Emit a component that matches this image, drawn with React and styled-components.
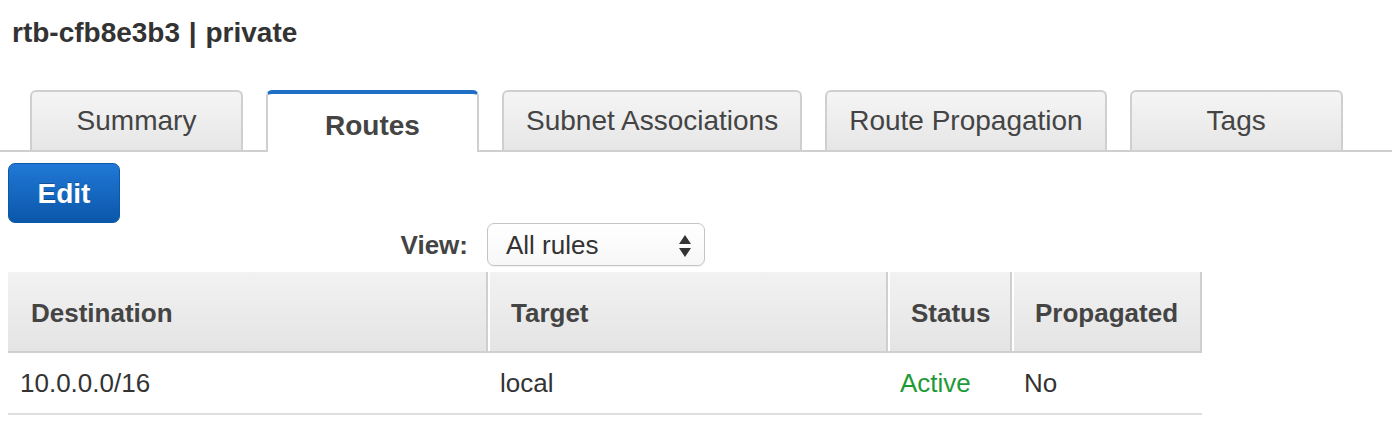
import styled, { createGlobalStyle } from "styled-components";

const GlobalStyle = createGlobalStyle`
  body {
    margin: 0;
    background: #fff;
    font-family: "Liberation Sans", Arial, Helvetica, sans-serif;
    color: #444;
  }
`;

const COLS = "480px 400px 124px 190px";

const Page = styled.div`
  width: 1392px;
  height: 448px;
  overflow: hidden;
`;

const Title = styled.h1`
  margin: 0;
  padding: 17px 12px 0;
  font-size: 28px;
  line-height: 32px;
  font-weight: 700;
  color: #333;
  height: 73px;
  box-sizing: border-box;
`;

const Sep = styled.span`
  margin: 0 1px;
`;

const TabBar = styled.div`
  display: flex;
  align-items: flex-end;
  gap: 23px;
  padding-left: 30px;
  margin-top: 17px;
  height: 60px;
  border-bottom: 2px solid #cfcfcf;
`;

const Tab = styled.div`
  box-sizing: border-box;
  min-width: 213px;
  padding: 0 22px;
  display: flex;
  align-items: center;
  justify-content: center;
  font-size: 28px;
  color: #444;
  border: 2px solid #cfcfcf;
  border-bottom: none;
  border-radius: 6px 6px 0 0;
  height: ${({ active }) => (active ? "62px" : "60px")};
  margin-bottom: ${({ active }) => (active ? "-2px" : "0")};
  background: ${({ active }) =>
    active ? "#fff" : "linear-gradient(#f5f5f5, #e6e6e6)"};
  border-top: ${({ active }) =>
    active ? "4px solid #1f6fc5" : "2px solid #cfcfcf"};
  font-weight: ${({ active }) => (active ? 700 : 400)};
  padding-top: ${({ active }) => (active ? "6px" : "0")};
`;

const Toolbar = styled.div`
  padding: 11px 0 0 8px;
`;

const EditButton = styled.button`
  box-sizing: border-box;
  width: 112px;
  height: 60px;
  padding-top: 3px;
  border: 1px solid #0d58a8;
  border-radius: 7px;
  background: linear-gradient(#2178d6, #0b57aa);
  color: #fff;
  font-family: inherit;
  font-size: 28px;
  font-weight: 700;
  text-shadow: 0 -1px 0 rgba(0, 0, 0, 0.25);
  cursor: pointer;
`;

const ViewRow = styled.div`
  display: grid;
  grid-template-columns: ${COLS};
  margin-left: 8px;
  height: 43px;
  align-items: center;
`;

const ViewLabel = styled.label`
  justify-self: end;
  padding-right: 20px;
  padding-top: 2px;
  font-size: 26px;
  font-weight: 700;
  color: #444;
`;

const Select = styled.div`
  box-sizing: border-box;
  width: 218px;
  height: 43px;
  margin-left: -1px;
  border: 1px solid #c4c4c4;
  border-radius: 7px;
  background: linear-gradient(#fff, #f7f7f7);
  box-shadow: 0 1px 1px rgba(0, 0, 0, 0.06);
  display: flex;
  align-items: center;
  justify-content: space-between;
  padding: 2px 12px 0 18px;
  font-size: 26px;
  color: #333;
`;

const Table = styled.div`
  margin: 6px 0 0 8px;
  width: 1194px;
`;

const Row = styled.div`
  display: grid;
  grid-template-columns: ${COLS};
  border-bottom: 2px solid ${({ head }) => (head ? "#cfcfcf" : "#dedede")};
`;

const HeadCell = styled.div`
  box-sizing: border-box;
  height: 79px;
  display: flex;
  align-items: center;
  padding-top: 4px;
  padding-left: ${({ first }) => (first ? "23px" : "21px")};
  background: linear-gradient(#f2f2f2, #e4e4e4);
  border-right: 2px solid #cfcfcf;
  border-left: ${({ first }) => (first ? "none" : "2px solid #fff")};
  font-size: 26px;
  font-weight: 700;
  color: #444;
`;

const Cell = styled.div`
  height: 60px;
  display: flex;
  align-items: center;
  padding-left: 12px;
  font-size: 26px;
  color: ${({ ok }) => (ok ? "#1f9a38" : "#333")};
`;

function Arrows() {
  return (
    <svg width="14" height="24" viewBox="0 0 14 24">
      <path d="M7 1 L13 10 L1 10 Z" fill="#333" />
      <path d="M7 23 L13 14 L1 14 Z" fill="#333" />
    </svg>
  );
}

const tabs = [
  "Summary",
  "Routes",
  "Subnet Associations",
  "Route Propagation",
  "Tags",
];

const columns = ["Destination", "Target", "Status", "Propagated"];

export default function App() {
  return (
    <Page>
      <GlobalStyle />
      <Title>
        rtb-cfb8e3b3 <Sep>|</Sep> private
      </Title>
      <TabBar>
        {tabs.map((t) => (
          <Tab key={t} active={t === "Routes"}>
            {t}
          </Tab>
        ))}
      </TabBar>
      <Toolbar>
        <EditButton>Edit</EditButton>
      </Toolbar>
      <ViewRow>
        <ViewLabel>View:</ViewLabel>
        <Select>
          <span>All rules</span>
          <Arrows />
        </Select>
      </ViewRow>
      <Table>
        <Row head>
          {columns.map((c, i) => (
            <HeadCell key={c} first={i === 0}>
              {c}
            </HeadCell>
          ))}
        </Row>
        <Row>
          <Cell>10.0.0.0/16</Cell>
          <Cell>local</Cell>
          <Cell ok>Active</Cell>
          <Cell>No</Cell>
        </Row>
      </Table>
    </Page>
  );
}
